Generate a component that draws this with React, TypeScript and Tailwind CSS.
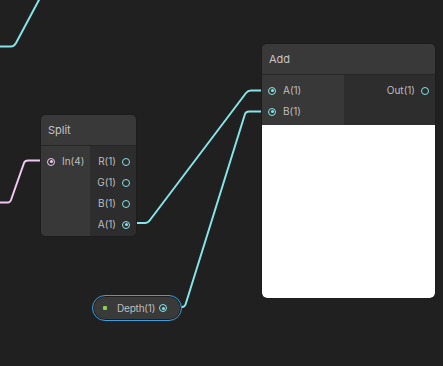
import React from 'react';

const FLOAT = '#84e4e7';
const VEC4 = '#f1c8f0';

function Port({ color, connected }: { color: string; connected?: boolean }) {
  return (
    <span
      className="flex h-[8px] w-[8px] shrink-0 items-center justify-center rounded-full border-[1.5px]"
      style={{ borderColor: color }}
    >
      {connected && <span className="h-[3px] w-[3px] rounded-full" style={{ background: color }} />}
    </span>
  );
}

function InRow({ label, color, connected }: { label: string; color: string; connected?: boolean }) {
  return (
    <div className="flex h-[21px] items-center gap-[7px] pl-[6px]">
      <Port color={color} connected={connected} />
      <span className="text-[10px] text-[#bebebe]">{label}</span>
    </div>
  );
}

function OutRow({ label, color, connected }: { label: string; color: string; connected?: boolean }) {
  return (
    <div className="flex h-[21px] items-center justify-end gap-[6px] pr-[6px]">
      <span className="text-[10px] text-[#bebebe]">{label}</span>
      <Port color={color} connected={connected} />
    </div>
  );
}

export default function App() {
  return (
    <div
      className="relative h-[366px] w-[443px] overflow-hidden bg-[#202020]"
      style={{ fontFamily: 'Inter, "Noto Sans", sans-serif' }}
    >
      {/* edges */}
      <svg className="absolute inset-0" width="443" height="366" fill="none" strokeWidth="2" strokeLinejoin="round" strokeLinecap="round">
        <path d="M-2 46.5 H11 Q14 46.5 16 43 L40 -2" stroke={FLOAT} />
        <path d="M-2 202.5 H8 Q10 202.5 11 200 L24 163 Q25 160.5 28 160.5 H50" stroke={VEC4} />
        <path d="M126 223 H145 Q148 223 150 220 L246 93 Q248 90.5 251 90.5 H271" stroke={FLOAT} />
        <path d="M164 307 H182 Q185 307 186 303 L245 114 Q246 111.5 249 111.5 H271" stroke={FLOAT} />
      </svg>

      {/* Split node */}
      <div className="absolute left-[40px] top-[114px] flex h-[123px] w-[97px] flex-col overflow-hidden rounded-[6px] border border-[#1c1c1c] bg-[#383838]">
        <div className="flex h-[31px] items-center border-b border-[#262626] bg-[#393939] pl-[7px] text-[11px] text-[#c4c4c4]">
          Split
        </div>
        <div className="flex flex-1">
          <div className="w-[49px] bg-[#383838] pt-[5px]">
            <InRow label="In(4)" color={VEC4} connected />
          </div>
          <div className="flex-1 bg-[#2d2d2d] pt-[5px]">
            <OutRow label="R(1)" color={FLOAT} />
            <OutRow label="G(1)" color={FLOAT} />
            <OutRow label="B(1)" color={FLOAT} />
            <OutRow label="A(1)" color={FLOAT} connected />
          </div>
        </div>
      </div>

      {/* Add node */}
      <div className="absolute left-[261px] top-[43px] flex h-[256px] w-[175px] flex-col overflow-hidden rounded-[6px] border border-[#1c1c1c] bg-[#383838]">
        <div className="flex h-[31px] items-center border-b border-[#262626] bg-[#393939] pl-[7px] text-[11px] text-[#c4c4c4]">
          Add
        </div>
        <div className="flex h-[50px]">
          <div className="w-[82px] bg-[#383838] pt-[5px]">
            <InRow label="A(1)" color={FLOAT} connected />
            <InRow label="B(1)" color={FLOAT} connected />
          </div>
          <div className="flex-1 bg-[#2d2d2d] pt-[5px]">
            <OutRow label="Out(1)" color={FLOAT} />
          </div>
        </div>
        <div className="flex-1 rounded-b-[5px] bg-white" />
      </div>

      {/* Depth property node */}
      <div className="absolute left-[92px] top-[295px] flex h-[26px] w-[90px] items-center rounded-full border-[1.5px] border-[#3d9fdc] bg-[#1e1e1e] p-[1px]">
        <div className="flex h-full w-full items-center rounded-full bg-[#3a3a3a] pl-[9px] pr-[13px]">
          <span className="h-[4px] w-[4px] shrink-0 rounded-[1px] bg-[#8ad14a]" />
          <span className="ml-[10px] text-[10px] tracking-[-0.2px] text-[#bebebe]">Depth(1)</span>
          <span className="ml-auto">
            <Port color={FLOAT} connected />
          </span>
        </div>
      </div>
    </div>
  );
}
